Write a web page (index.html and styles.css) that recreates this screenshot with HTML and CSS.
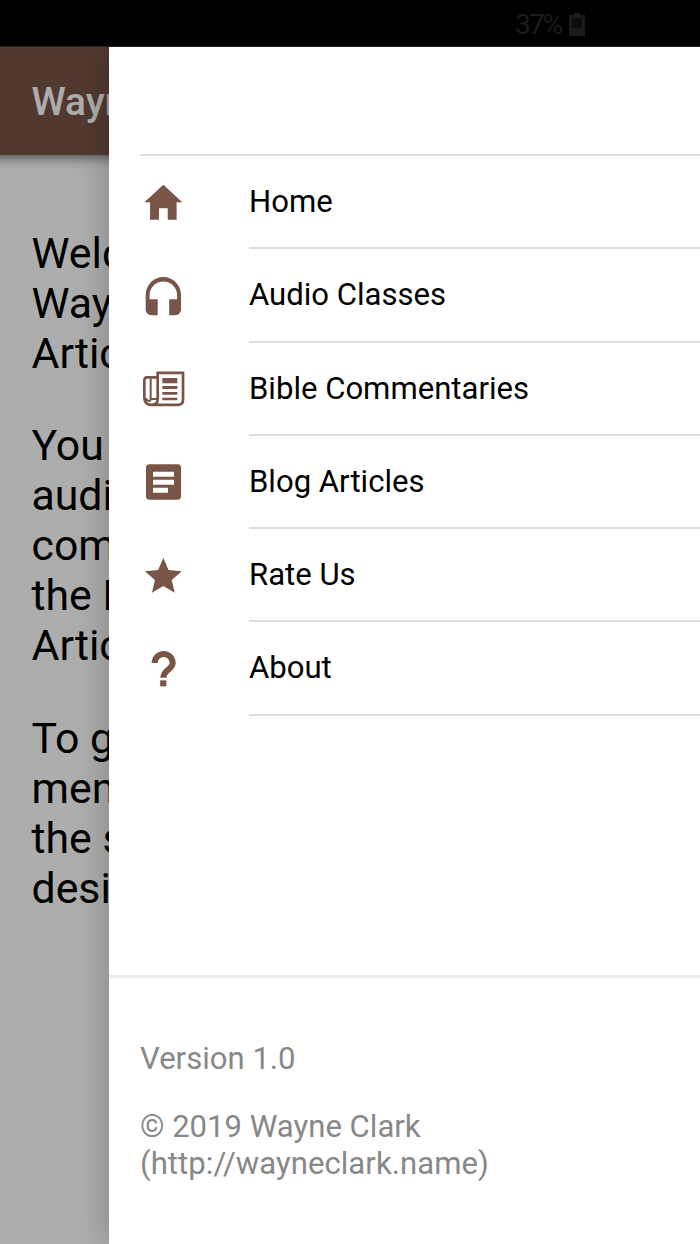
FILE: index.html
```
<!DOCTYPE html>
<html lang="en">
<head>
  <meta charset="UTF-8">
  <title>Wayne Clark</title>
  <meta name="viewport" content="width=device-width,initial-scale=1">
  <link rel="stylesheet" href="styles.css">
</head>
<body>
<div class="status">
  <span class="percent">37%</span>
  <svg class="battery" viewBox="0 0 16 23"><path d="M5 0h6v2h5v21H0V2h5z" fill="#1b1b1b"/><path d="M3 5h10v10H3z" fill="#0c0c0c"/></svg>
</div>

<div class="app">
  <div class="page">
    <header class="toolbar">Wayne</header>
    <main class="content">
      <p>Welcome<br>Wayne<br>Articles</p>
      <p>You can<br>audio<br>comment<br>the Blog<br>Articles</p>
      <p>To get<br>menu<br>the side<br>desired</p>
    </main>
  </div>
  <div class="backdrop"></div>

  <aside class="drawer">
    <nav class="menu">
      <a class="item">
        <svg class="icon" viewBox="0 0 512 512"><path d="M208 448V320h96v128h97.6V256H464L256 64 48 256h62.4v192z"/></svg>
        <span class="label">Home</span>
      </a>
      <a class="item">
        <svg class="icon" viewBox="0 0 512 512"><path d="M256 44C150 44 62 132 62 243v155.400c0 36.3 28.6 65.7 64 65.700h68V288h-89v-44.900c0-84.700 68-149.300 151-149.300s151 64.600 151 149.300V288H320v176h66c35.400 0 64-29.300 64-65.700V243C450 132 362 44 256 44z"/></svg>
        <span class="label">Audio Classes</span>
      </a>
      <a class="item">
        <svg class="icon" viewBox="0 0 140 140">
          <path class="line" d="M53 101.500V20.500h76v81q0 15-15 15H35q-22 0-22-22V43q0-9 9-9h30M53 99q0 17-16 17"/>
          <path class="line thin" d="M32 37v62h20M32 99q0 6-5 6q-8-1-10-9"/>
          <path d="M67 36h45v16H67zM67 60h45v9H67zM67 78h45v8H67zM67 95h45v8H67z"/>
        </svg>
        <span class="label">Bible Commentaries</span>
      </a>
      <a class="item">
        <svg class="icon" viewBox="0 0 140 140"><path fill-rule="evenodd" d="M28 16h85q10 0 10 10v86q0 10-10 10H28q-10 0-10-10V26q0-10 10-10zM39 38v15h63V38zM39 62v15h63V62zM39 86v15h45V86z"/></svg>
        <span class="label">Blog Articles</span>
      </a>
      <a class="item">
        <svg class="icon" viewBox="0 0 512 512"><path d="M256 372.700L380.800 448l-33-142.100L458 210.400l-145.300-12.500L256 64l-56.700 133.900L54 210.400l110.200 95.500L131.200 448z"/></svg>
        <span class="label">Rate Us</span>
      </a>
      <a class="item">
        <svg class="icon" viewBox="0 0 140 140"><path class="line wide" d="M44 51a27 27 0 0 1 54 0c0 19-28 21-28 44"/><path d="M60.500 103h18.500v18H60.500z"/></svg>
        <span class="label">About</span>
      </a>
    </nav>
    <footer class="footer">
      <p>Version 1.0</p>
      <p>© 2019 Wayne Clark<br><span class="url">(http://wayneclark.name)</span></p>
    </footer>
  </aside>
</div>
</body>
</html>
```

FILE: styles.css
```
*{box-sizing:border-box}
body{margin:0;width:700px;height:1244px;overflow:hidden;background:#fff;font-family:Roboto,"Liberation Sans",sans-serif;color:#000}
p{margin:0}

.status{display:flex;align-items:center;height:47px;padding:2px 0 0 515px;background:#000;border-bottom:1px solid #222;color:#1b1b1b;font-size:28.500px;letter-spacing:-2.300px}
.percent{width:54px}
.battery{width:16px;height:23px}

.app{position:relative;height:1197px;overflow:hidden}
.page{height:100%;white-space:nowrap}
.toolbar{margin-left:-30px;height:108px;padding-left:61.500px;background:#795548;color:#fff;font-size:38.900px;font-weight:500;line-height:109px;box-shadow:0 2px 12px rgba(0,0,0,.6)}
.content{padding:72.500px 31.500px;font-size:42.800px;line-height:50px}
.content p{margin-bottom:42.800px}
.backdrop{position:absolute;inset:0;background:rgba(0,0,0,.32)}

/* the drawer lies over the page */
.drawer{position:absolute;top:0;left:109px;right:-30px;bottom:0;display:flex;flex-direction:column;background:#fff;box-shadow:0 0 32px rgba(0,0,0,.25)}
.menu{flex:1;margin:107px 0 0 31px;border-top:2px solid #dedede}
.item{display:flex;align-items:center;height:93.260px}
.icon{width:46.700px;height:46.700px;margin-right:62.300px;fill:#795548}
.line{fill:none;stroke:#795548;stroke-width:8}
.thin{stroke-width:6}
.wide{stroke-width:18}
.label{flex:1;height:100%;border-bottom:2px solid #dedede;font-size:31.100px;line-height:91px}
.footer{height:269px;padding:62px 31px 0;border-top:3px solid #ececec;color:#888;font-size:31.100px;line-height:37px}
.footer p{margin-bottom:31px}
.url{letter-spacing:.05px}
```
